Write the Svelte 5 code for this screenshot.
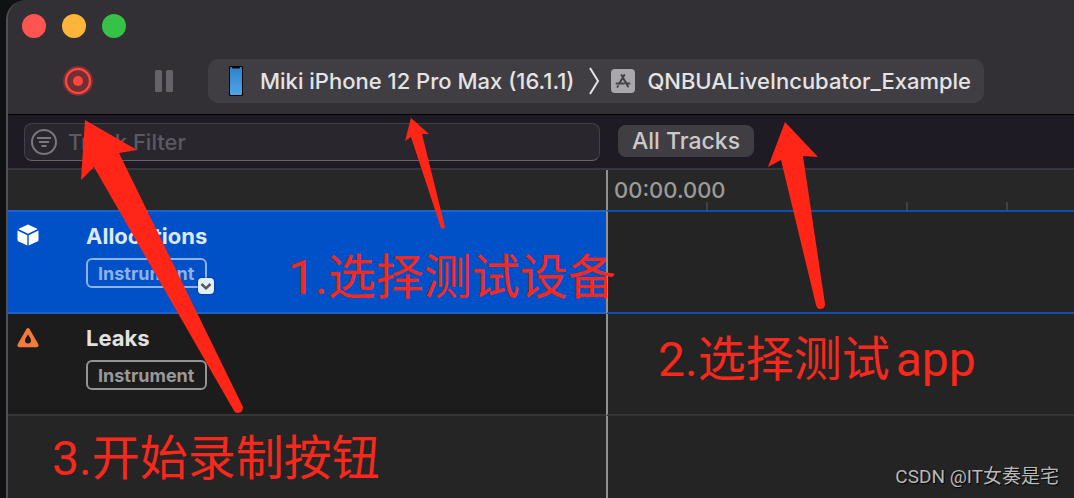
<script>
    let filter = "";
    let selected = "Allocations";

    const tracks = [
        { name: "Allocations", icon: "cube" },
        { name: "Leaks", icon: "leak" },
    ];

    // ruler marks, px from the start of the timeline
    const ticks = [98, 298, 398];

    const arrows = [
        "M85 120 L137 150 L119 153 L243 407 Q243 413 237 413 Q234 412 233 409 L94 167 L81 180 Z",
        "M411 118 L429 134 L422 134 L445 227 Q444 230 441 228 L411 137 L405 141 Z",
        "M785 122 L818 157 L803 156 L825 304 Q825 309 820 309 Q817 309 816 305 L781 160 L768 167 Z",
    ];
</script>

<main>
    <div class="window">
        <header>
            <div class="lights">
                <button class="light red" aria-label="Close"></button>
                <button class="light yellow" aria-label="Minimize"></button>
                <button class="light green" aria-label="Zoom"></button>
            </div>
            <div class="toolbar">
                <button class="record" aria-label="Record">
                    <svg width="30" height="30" viewBox="0 0 30 30">
                        <circle cx="15" cy="15" r="15" fill="#7a3034" />
                        <circle cx="15" cy="15" r="12" fill="#6f3034" stroke="#ff453d" stroke-width="2.4" />
                        <circle cx="15" cy="15" r="5" fill="#ff453d" />
                    </svg>
                </button>
                <button class="pause" aria-label="Pause">
                    <svg width="18" height="22" viewBox="0 0 18 22" fill="#656369">
                        <rect width="7" height="22" rx="1.5" />
                        <rect x="11" width="7" height="22" rx="1.5" />
                    </svg>
                </button>
                <div class="target">
                    <button class="device">
                        <svg width="16" height="32" viewBox="0 0 16 32">
                            <defs>
                                <linearGradient id="screen" x2="0" y2="1">
                                    <stop stop-color="#2f82c8" />
                                    <stop offset="1" stop-color="#4ea5ea" />
                                </linearGradient>
                            </defs>
                            <rect x="1" y="1" width="14" height="30" rx="1.5" fill="#050507" />
                            <rect x="2" y="2" width="12" height="28" rx="1" fill="url(#screen)" />
                            <path d="M4 1.500h8v1q0 1-1 1H5q-1 0-1-1z" fill="#050507" />
                        </svg>
                        <span>Miki iPhone 12 Pro Max (16.1.1)</span>
                    </button>
                    <svg class="chevron" width="12" height="30" viewBox="0 0 12 30">
                        <path d="M2 2 L10 15 L2 28" fill="none" stroke="#e4e3e5" stroke-width="2" />
                    </svg>
                    <button class="app">
                        <svg width="24" height="24" viewBox="0 0 24 24">
                            <rect width="24" height="24" rx="4" fill="#a9a7ab" />
                            <path
                                d="M13.300 6 L8.300 14.500 M10.500 6 L17 17.500 M5.500 14.500 H13 M16 14.500 H18.500 M7 17 L6.500 17.800"
                                fill="none"
                                stroke="#434146"
                                stroke-width="2"
                                stroke-linecap="round"
                            />
                        </svg>
                        <span>QNBUALiveIncubator_Example</span>
                    </button>
                </div>
            </div>
        </header>

        <div class="filters">
            <label class="search">
                <svg width="28" height="28" viewBox="0 0 28 28" fill="none" stroke="#7a787e" stroke-width="2">
                    <circle cx="14" cy="14" r="12" />
                    <path d="M7 10h14M9 14h10M11.500 18h5" />
                </svg>
                <input type="text" placeholder="Track Filter" aria-label="Track Filter" bind:value={filter} />
            </label>
            <button class="all">All Tracks</button>
        </div>

        <div class="ruler">
            <div class="side"></div>
            <div class="lane">
                <time>00:00.000</time>
                {#each ticks as tick}
                    <i style="left: {tick}px"></i>
                {/each}
            </div>
        </div>

        {#each tracks as track}
            <div class="track" class:selected={track.name === selected}>
                <div class="side">
                    {#if track.icon === "cube"}
                        <svg width="22" height="22" viewBox="0 0 22 22" fill="#fff">
                            <path d="M11 0.500 L20.700 5 L11 9.800 L1.300 5 Z" />
                            <path d="M0.500 6.500 L10.300 11.200 V21.500 L1.300 17.200 Q0.500 16.800 0.500 16 Z" />
                            <path d="M21.500 6.500 L11.700 11.200 V21.500 L20.700 17.200 Q21.500 16.800 21.500 16 Z" />
                        </svg>
                    {:else}
                        <svg width="22" height="22" viewBox="0 -1 22 22">
                            <path d="M9.300 2.200 Q11 0 12.700 2.200 L21.200 17 Q22.300 20 19.500 20.200 H2.500 Q-0.300 20 0.800 17 Z" fill="#f57a3d" />
                            <path d="M11 7.500 Q14 11.500 14 13.500 A3 3 0 0 1 8 13.500 Q8 11.500 11 7.500 Z" fill="#1c1c1c" />
                        </svg>
                    {/if}
                    <div class="info">
                        <strong>{track.name}</strong>
                        <div class="badge">
                            Instrument
                            {#if track.name === selected}
                                <button class="more" aria-label="Track options">
                                    <svg width="16" height="16" viewBox="0 0 16 16">
                                        <path d="M3.500 6 L8 10.300 L12.500 6" fill="none" stroke="#555" stroke-width="2.500" />
                                    </svg>
                                </button>
                            {/if}
                        </div>
                    </div>
                </div>
                <div class="lane"></div>
            </div>
        {/each}

        <div class="rest">
            <div class="side"></div>
            <div class="lane"></div>
        </div>
    </div>

    <svg class="arrows" width="1074" height="498" viewBox="0 0 1074 498">
        {#each arrows as d}
            <path {d} fill="#ff2517" />
        {/each}
    </svg>
    <p class="note one">1.选择测试设备</p>
    <p class="note two">2.选择测试<span>app</span></p>
    <p class="note three">3.开始录制按钮</p>
    <p class="watermark">CSDN @IT女奏是宅</p>
</main>

<style>
    :global(body) {
        margin: 0;
        background: #101112;
    }

    main {
        position: relative;
        display: flex;
        min-height: 100vh;
        padding-left: 6px;
        box-sizing: border-box;
        overflow: hidden;
        font-family: Inter, "Noto Sans CJK SC", sans-serif;
    }

    button {
        padding: 0;
        border: 0;
        background: none;
        color: inherit;
        font: inherit;
    }

    svg {
        display: block;
        flex: none;
    }

    .window {
        flex: 1;
        min-width: 0;
        display: flex;
        flex-direction: column;
        border-left: 2px solid #515054;
        border-top-left-radius: 20px;
        background: #252525;
        overflow: hidden;
    }

    header {
        padding-bottom: 11px;
        border-bottom: 1px solid #000;
        background: #323034;
    }

    .lights {
        display: flex;
        gap: 16px;
        padding: 14px 14px 21px;
    }

    .light {
        width: 24px;
        height: 24px;
        border-radius: 50%;
    }

    .red {
        background: #ff5550;
    }

    .yellow {
        background: #ffb43c;
    }

    .green {
        background: #35c246;
    }

    .toolbar {
        display: flex;
        align-items: center;
    }

    .record {
        margin-left: 55px;
    }

    .pause {
        margin: 0 35px 0 62px;
    }

    .target {
        display: flex;
        align-items: center;
        height: 44px;
        padding: 0 13px 0 20px;
        border-radius: 10px;
        background: #403e42;
        color: #e4e3e5;
        font-size: 22px;
        font-weight: 500;
        white-space: nowrap;
    }

    .device {
        display: flex;
        align-items: center;
        gap: 16px;
    }

    .chevron {
        margin: 0 11px 0 14px;
    }

    .app {
        display: flex;
        align-items: center;
        gap: 12px;
    }

    .filters {
        display: flex;
        align-items: center;
        gap: 18px;
        height: 53px;
        padding-left: 16px;
        border-bottom: 2px solid #38363b;
        background: #1e1b25;
    }

    .search {
        display: flex;
        align-items: center;
        gap: 10px;
        width: 576px;
        height: 38px;
        padding-left: 5px;
        box-sizing: border-box;
        border: 1px solid #434147;
        border-bottom-color: #66646a;
        border-radius: 8px;
        background: #29262d;
    }

    input {
        flex: 1;
        min-width: 0;
        padding: 0;
        border: 0;
        outline: 0;
        background: none;
        color: #dddce0;
        font: 500 22px Inter, sans-serif;
    }

    input::placeholder {
        color: #5c5a60;
        opacity: 1;
    }

    .all {
        height: 32px;
        margin-bottom: 1px;
        padding: 0 14px;
        border-radius: 8px;
        background: #403e43;
        color: #cac9cc;
        font-size: 23px;
        font-weight: 500;
    }

    .ruler,
    .track,
    .rest {
        display: flex;
    }

    .ruler {
        height: 40px;
    }

    .side {
        flex: 0 0 598px;
        box-sizing: border-box;
    }

    .lane {
        position: relative;
        flex: 1;
        border-left: 2px solid #919194;
        background: #242424;
    }

    .ruler .side,
    .ruler .lane {
        background: #272727;
    }

    time {
        display: block;
        padding: 6px;
        color: #9b9b9b;
        font-size: 22px;
        font-weight: 500;
        line-height: 28px;
    }

    .lane i {
        position: absolute;
        bottom: 0;
        width: 2px;
        height: 8px;
        background: #414141;
    }

    .track .side {
        display: flex;
        gap: 47px;
        height: 102px;
        padding: 12px 9px;
        border-bottom: 2px solid #353535;
        background: #1c1c1c;
        color: #e2e2e2;
    }

    .track .lane {
        border-bottom: 2px solid #353535;
    }

    .track.selected .side {
        height: 104px;
        border-top: 2px solid #1c62c8;
        border-bottom-color: #1c62c8;
        background: #0050c8;
        color: #dce8fb;
    }

    .track.selected .lane {
        border-top: 2px solid #114fae;
        border-bottom-color: #114fae;
    }

    strong {
        display: block;
        font-size: 22px;
        font-weight: 700;
        line-height: 24px;
    }

    .badge {
        position: relative;
        display: inline-block;
        height: 26px;
        margin-top: 10px;
        padding: 0 11px 0 10px;
        border: 2px solid #949494;
        border-radius: 6px;
        color: #999;
        font-size: 18px;
        font-weight: 700;
        line-height: 27px;
    }

    .selected .badge {
        border-color: #8eb1e8;
        color: #8eb1e8;
    }

    .more {
        position: absolute;
        right: -9px;
        bottom: -8px;
        width: 16px;
        height: 16px;
        border-radius: 4px;
        background: #e2edff;
        box-shadow: 0 0 2px #123;
    }

    .rest {
        flex: 1;
    }

    .arrows {
        position: absolute;
        top: 0;
        left: 0;
        pointer-events: none;
    }

    .note {
        position: absolute;
        margin: 0;
        color: #f8281c;
        font-family: Roboto, "Noto Sans CJK SC", sans-serif;
        font-size: 48px;
        line-height: 60px;
        white-space: nowrap;
    }

    .note span {
        margin-left: 6px;
    }

    .one {
        top: 248px;
        left: 288px;
    }

    .two {
        top: 330px;
        left: 658px;
    }

    .three {
        top: 429px;
        left: 52px;
    }

    .watermark {
        position: absolute;
        right: 15px;
        bottom: 8px;
        margin: 0;
        color: #b9b9b9;
        font: 19px/26px Roboto, "Noto Sans CJK SC", sans-serif;
        text-shadow: 1px 1px 1px #000;
    }
</style>
